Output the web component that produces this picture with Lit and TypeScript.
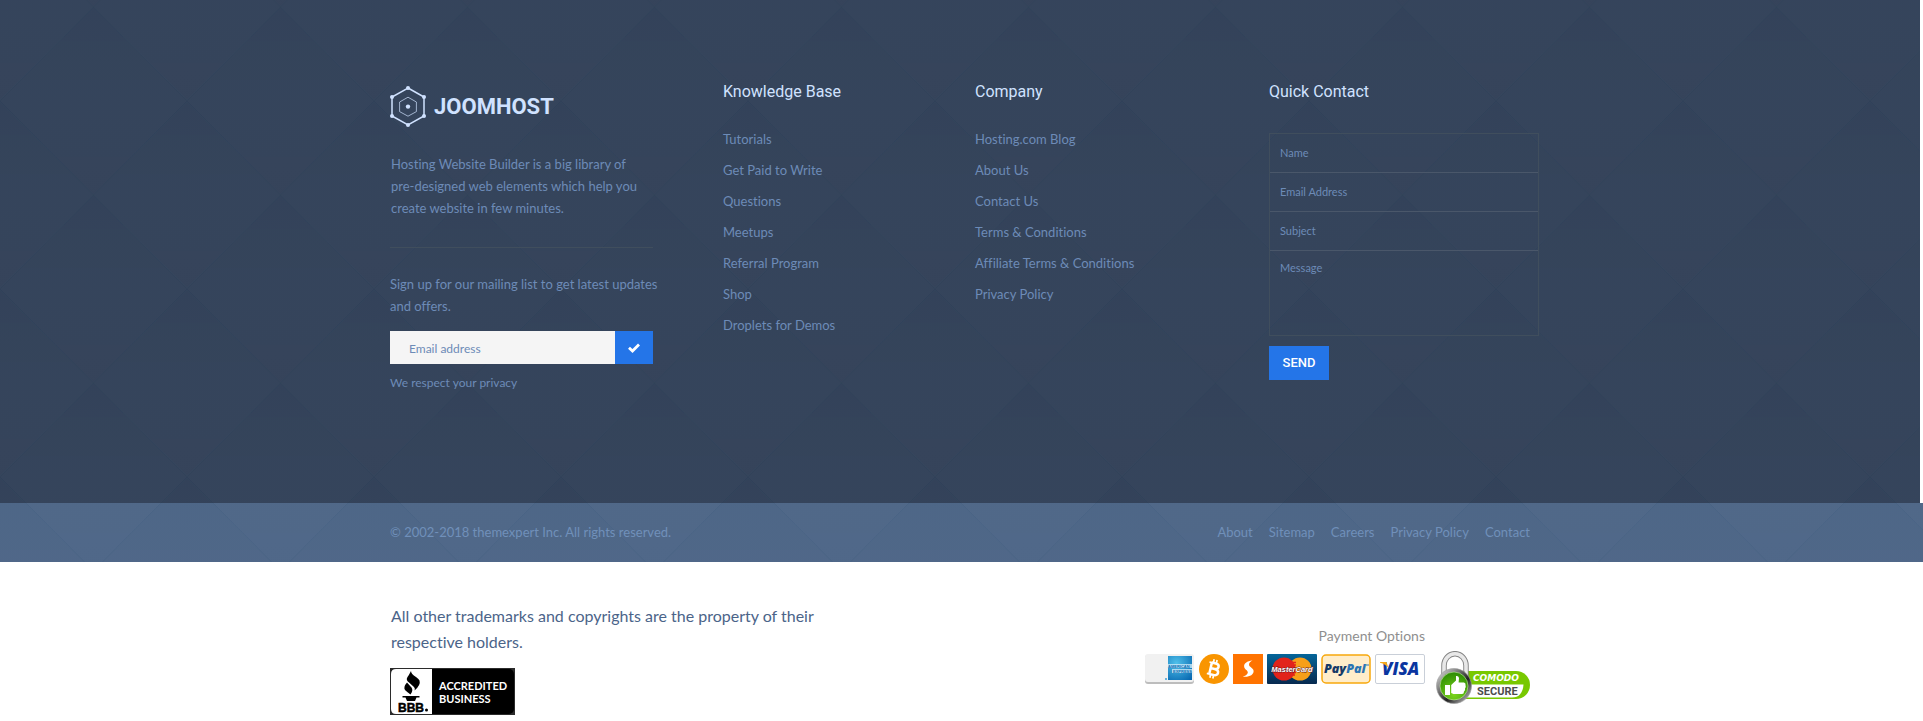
import { LitElement, html, css, svg } from "lit";
import { customElement } from "lit/decorators.js";

const knowledge = ["Tutorials", "Get Paid to Write", "Questions", "Meetups", "Referral Program", "Shop", "Droplets for Demos"];
const company = ["Hosting.com Blog", "About Us", "Contact Us", "Terms & Conditions", "Affiliate Terms & Conditions", "Privacy Policy"];
const legal = ["About", "Sitemap", "Careers", "Privacy Policy", "Contact"];

const logoDots = [[18, 2], [34, 11], [34, 30], [18, 39], [2, 30], [2, 11]];

const logo = html`<svg width="36" height="41" viewBox="0 0 36 41" fill="none" stroke="#d0e2ff" aria-hidden="true">
  <path d="M18 2 34 11V30L18 39 2 30V11Z" stroke-width="1.5" />
  <path d="M18 11.2 26.4 16V25.6L18 30.2 9.6 25.6V16Z" stroke-width="1" opacity=".7" />
  ${logoDots.map(([x, y]) => svg`<circle cx=${x} cy=${y} r="2" fill="#d0e2ff" stroke="none" />`)}
  <circle cx="18" cy="20.6" r="2.2" fill="#d0e2ff" stroke="none" />
</svg>`;

const amex = html`<svg width="50" height="30" viewBox="0 0 50 30" role="img" aria-label="American Express">
  <defs>
    <radialGradient id="ax" cx=".35" cy=".3" r=".9"><stop offset="0" stop-color="#4fc0ea" /><stop offset="1" stop-color="#0767b0" /></radialGradient>
  </defs>
  <rect x="0" y="1" width="49" height="29" rx="3" fill="#bdbdbd" />
  <rect x="0" y="0" width="49" height="28" rx="3" fill="#f1f1f1" />
  <rect x="23" y="2" width="24" height="24" fill="url(#ax)" />
  <rect x="23" y="10" width="24" height="4" fill="#d7effa" opacity=".75" />
  <rect x="27" y="15" width="20" height="4" fill="#d7effa" opacity=".75" />
  <g font-family="Liberation Sans" font-weight="700" font-size="4" fill="#0b6fb5">
    <text x="23" y="14">AMERICAN</text><text x="28" y="19">EXPRESS</text>
  </g>
  <rect x="20" y="24" width="2" height="2" fill="#6bb3dc" />
</svg>`;

const bitcoin = html`<svg width="30" height="30" viewBox="0 0 30 30" role="img" aria-label="Bitcoin">
  <circle cx="15" cy="15" r="15" fill="#f99500" />
  <g transform="rotate(13 15 15)" fill="none" stroke="#fff">
    <path d="M11.5 9V21M11.5 9.2H15.5Q19 9.2 19 12T15.5 14.8H11.5M15.5 14.8Q19.8 14.8 19.8 17.9T15.5 20.9H11.5" stroke-width="2.5" />
    <path d="M9 9.2H12M9 20.9H12M13 5.5V9M16 5.5V9M13 21V24.5M16 21V24.5" stroke-width="1.7" />
  </g>
</svg>`;

const skrill = html`<svg width="30" height="30" viewBox="0 0 30 30" role="img" aria-label="Payment provider">
  <rect width="30" height="30" fill="#ff7300" />
  <path d="M19.5 6.5C14 7 10.500 9.500 11.200 13C11.800 15.800 15.200 16.200 14.800 18.800C14.500 20.700 12 22 9.800 22.600C15.800 23.600 20.800 20.800 20.600 17C20.400 13.600 15.900 13.200 16 10.500C16 8.800 17.500 7.400 19.500 6.500Z" fill="#fff" />
</svg>`;

const mastercard = html`<svg width="50" height="30" viewBox="0 0 50 30" role="img" aria-label="MasterCard">
  <defs><linearGradient id="mc" x2="0" y2="1"><stop stop-color="#04659a" /><stop offset="1" stop-color="#07294f" /></linearGradient></defs>
  <rect width="50" height="30" rx="1" fill="url(#mc)" />
  <circle cx="33" cy="15" r="11.500" fill="#f79f1a" />
  <circle cx="17" cy="15" r="11.500" fill="#e2231a" />
  <path d="M22 8.500H29M22 11H29M23 18.500H29M22 21H28" stroke="#e2231a" stroke-width="1.300" />
  <text x="25" y="18" text-anchor="middle" font-family="Liberation Sans" font-weight="700" font-style="italic" font-size="7.500" fill="#fff" stroke="#5b1620" stroke-width=".8" paint-order="stroke">MasterCard</text>
</svg>`;

const paypal = html`<svg width="50" height="30" viewBox="0 0 50 30" role="img" aria-label="PayPal">
  <rect x="1" y="1" width="48" height="28" rx="4" fill="#ffedca" stroke="#f7a80d" stroke-width="1.500" />
  <g font-family="Open Sans" font-weight="800" font-style="italic" font-size="12.500"><text x="3" y="19" fill="#163a67">Pay<tspan fill="#2c74b3">Pal</tspan></text></g>
  <path d="M45 11H48" stroke="#2c74b3" />
</svg>`;

const visa = html`<svg width="50" height="30" viewBox="0 0 50 30" role="img" aria-label="Visa">
  <rect x=".5" y=".5" width="49" height="29" rx="1.500" fill="#fff" stroke="#c9cfd8" />
  <text x="7" y="21" font-family="Open Sans" font-weight="800" font-style="italic" font-size="17" fill="#0a35a0">VISA</text>
  <path d="M5 8H11.500L13.500 14Q10.500 10 5 8.800Z" fill="#f8a81b" />
</svg>`;

const comodo = html`<svg width="94" height="53" viewBox="0 0 94 53" role="img" aria-label="Comodo Secure">
  <defs>
    <linearGradient id="mt" x2="1" y2="1"><stop stop-color="#eee" /><stop offset=".35" stop-color="#777" /><stop offset=".6" stop-color="#222" /><stop offset="1" stop-color="#ddd" /></linearGradient>
    <radialGradient id="gr" cx=".5" cy=".8" r=".8"><stop stop-color="#7bd51a" /><stop offset="1" stop-color="#2c8a04" /></radialGradient>
  </defs>
  <path d="M20 20H80A14 14 0 0 1 80 48H20Z" fill="#78c800" />
  <path d="M20 33.500H87.500Q86.500 46.500 76 46.500H20Z" fill="#fff" />
  <path d="M8 27V14.500A11 11.800 0 0 1 30 14.500V27" fill="none" stroke="#858585" stroke-width="5.500" />
  <path d="M8 27V14.500A11 11.800 0 0 1 30 14.500V27" fill="none" stroke="#e8e8e8" stroke-width="3.600" />
  <circle cx="18" cy="35" r="17.500" fill="url(#mt)" stroke="#999" stroke-width=".6" />
  <circle cx="18" cy="35" r="14" fill="url(#gr)" stroke="#dfffc0" stroke-width=".5" />
  <path d="M9 34H14V44H9ZM15.200 34 20 29.500V25Q22.500 24.500 23 27L22.600 31.500H28Q30 32 29.500 34Q30.300 36 29 37.500Q29.500 39.500 28 40.500Q28 43 26 43H17.500L15.200 42Z" fill="#fff" />
  <text x="37" y="30" font-family="DejaVu Sans" font-weight="700" font-style="italic" font-size="9" fill="#fff">COMODO</text>
  <text x="41" y="44" font-family="Liberation Sans Narrow, Roboto" font-weight="700" font-size="11" fill="#4d4d4d">SECURE</text>
</svg>`;

const bbb = html`<svg width="125" height="47" viewBox="0 0 125 47" role="img" aria-label="BBB Accredited Business">
  <rect width="125" height="47" fill="#2b2b2b" />
  <rect x="1" y="1" width="123" height="45" rx="5" fill="#000" />
  <path d="M42 1V46H6Q1 46 1 41V6Q1 1 6 1Z" fill="#fff" />
  <path d="M21 3Q19 7 17.500 9Q15.500 12 19 14.500L24 19Q25.500 20.500 24.500 22.500Q31 17 29.500 12.500Q29 11 26 9Q21 6 21 3Z" />
  <path d="M17 14.500Q13 19 15 22Q17 24 20.500 26.500Q23.500 22.500 21.500 19.500Z" />
  <path d="M12.500 28H29.500V29.500H26.500L25 33H17L15.500 29.500H12.500Z" />
  <text x="8" y="44" font-family="Liberation Sans" font-weight="700" font-size="12" stroke="#000" stroke-width=".5">BBB</text>
  <circle cx="36.500" cy="42" r="1.500" />
  <g font-family="Lato" font-weight="700" font-size="11" fill="#fff"><text x="49" y="22">ACCREDITED</text><text x="49" y="35">BUSINESS</text></g>
</svg>`;

@customElement("app-root")
export class AppRoot extends LitElement {
  static styles = css`
    :host {
      display: block;
      background: #fff;
      color: #6d8bb7;
      font: 13px/22px Lato, "Open Sans", sans-serif;
      font-variant-ligatures: none;
      --diamonds: url("data:image/svg+xml,%3Csvg xmlns='http://www.w3.org/2000/svg' width='187' height='188'%3E%3Cdefs%3E%3ClinearGradient id='g' x2='0' y2='1'%3E%3Cstop stop-color='%23002848' stop-opacity='.025'/%3E%3Cstop offset='1' stop-color='%23fff' stop-opacity='.006'/%3E%3C/linearGradient%3E%3C/defs%3E%3Cg fill='url(%23g)' stroke='%23002838' stroke-opacity='.03'%3E%3Cpath d='M93.500 0 187 94 93.500 188 0 94Z'/%3E%3Cpath d='M0-94 93.500 0 0 94-93.500 0Z'/%3E%3Cpath d='M187-94 280.500 0 187 94 93.500 0Z'/%3E%3Cpath d='M0 94 93.500 188 0 282-93.500 188Z'/%3E%3Cpath d='M187 94 280.500 188 187 282 93.500 188Z'/%3E%3C/g%3E%3C/svg%3E");
    }
    * { box-sizing: border-box; }
    h2, p, ul { margin: 0; padding: 0; font-weight: 400; }
    ul { list-style: none; }
    svg { display: block; flex: none; }
    a { color: inherit; text-decoration: none; }
    input, textarea, button { display: block; margin: 0; border: 0; border-radius: 0; font: inherit; outline-offset: -2px; }
    .wrap { max-width: 1170px; margin: 0 auto; padding: 0 15px; }

    /* Label and control share one grid cell; the label steps aside once there is a value. */
    .field { display: grid; }
    .field > * { grid-area: 1 / 1; }
    .field label { pointer-events: none; }
    .field :not(:placeholder-shown) + label { visibility: hidden; }

    .main {
      margin-right: 3px;
      padding: 81px 0 109px;
      background: var(--diamonds) 0 7px, #34435a;
    }
    .columns {
      display: grid;
      grid-template-columns: 333fr 252fr 294fr 270fr;
      padding-right: 6px;
    }
    .about { padding-right: 70px; }
    .brand {
      display: flex;
      align-items: center;
      gap: 8px;
      padding: 5px 0 26px;
      color: #d0e2ff;
      font: 700 22px/41px Roboto, sans-serif;
    }
    .intro { padding: 0 12px 28px 1px; }
    .signup { border-top: 1px solid #404e5d; padding-top: 25px; }
    .signup p { margin-right: -16px; }
    .mail { display: flex; height: 33px; margin: 14px 0 8px; font-size: 12px; }
    .mail .field { flex: 1; background: #f5f5f5; line-height: 33px; }
    .mail input { width: 100%; padding: 2px 19px 0; background: none; color: inherit; }
    .mail label { padding: 1px 19px 0; }
    .mail button { display: grid; place-items: center; width: 38px; padding: 0; background: #2475e8; }
    .note { font-size: 12px; }
    h2 { color: #d0e2ff; font: 400 16px/22px Roboto, sans-serif; }
    .links { padding-top: 21px; line-height: 31px; }
    .fields { margin: 30px 0 10px; border: 1px solid #404e5d; font-size: 11px; }
    .fields .field { height: 39px; border-bottom: 1px solid #4a576a; line-height: 38px; }
    .fields .area { height: 84px; border: 0; line-height: 34px; }
    .fields input, .fields textarea { width: 100%; padding: 0 10px; background: none; color: inherit; resize: none; }
    .fields label { padding: 0 10px; }
    .send { height: 34px; min-width: 60px; padding: 0 13px; background: #2475e8; color: #fff; font: 500 13px/34px Roboto, sans-serif; }
    .bar { padding: 18px 3px 19px 0; background: var(--diamonds) 0 68px, #4f6788; color: #7090ba; }
    .bar .wrap, .bar nav { display: flex; justify-content: space-between; }
    .bar nav { gap: 16px; }
    .bottom { padding: 41px 3px 6px 0; }
    .bottom .wrap { display: flex; justify-content: space-between; align-items: flex-start; }
    .trade { max-width: 430px; padding-left: 1px; margin-bottom: 13px; color: #4b6489; font-size: 16px; line-height: 26px; }
    .trust { display: flex; gap: 11px; padding-top: 22px; }
    .caption { padding-bottom: 7px; text-align: right; color: #8f8f8f; font-size: 14px; }
    .cards { display: flex; gap: 4px; }
    .secure { padding-top: 26px; }
  `;

  private list(items: string[]) {
    return html`<ul class="links">${items.map((t) => html`<li><a href="#">${t}</a></li>`)}</ul>`;
  }

  private field(id: string, type: string, text: string) {
    return html`<div class="field"><input id=${id} type=${type} placeholder=" " /><label for=${id}>${text}</label></div>`;
  }

  render() {
    return html`
      <footer>
        <div class="main">
          <div class="wrap columns">
            <section class="about">
              <div class="brand">${logo}<span>JOOMHOST</span></div>
              <p class="intro">Hosting Website Builder is a big library of pre-designed web elements which help you create website in few minutes.</p>
              <div class="signup">
                <p>Sign up for our mailing list to get latest updates and offers.</p>
                <form class="mail">
                  ${this.field("news", "email", "Email address")}
                  <button type="button" aria-label="Subscribe">
                    <svg width="12" height="10" viewBox="0 0 12 10" fill="none" stroke="#fff" stroke-width="2.800"><path d="M1 4.700 4.500 8 11 1.500" /></svg>
                  </button>
                </form>
                <p class="note">We respect your privacy</p>
              </div>
            </section>
            <section><h2>Knowledge Base</h2>${this.list(knowledge)}</section>
            <section><h2>Company</h2>${this.list(company)}</section>
            <section>
              <h2>Quick Contact</h2>
              <form>
                <div class="fields">
                  ${this.field("name", "text", "Name")}
                  ${this.field("email", "email", "Email Address")}
                  ${this.field("subject", "text", "Subject")}
                  <div class="field area"><textarea id="message" placeholder=" "></textarea><label for="message">Message</label></div>
                </div>
                <button class="send" type="button">SEND</button>
              </form>
            </section>
          </div>
        </div>
        <div class="bar">
          <div class="wrap">
            <p>© 2002-2018 themexpert Inc. All rights reserved.</p>
            <nav>${legal.map((t) => html`<a href="#">${t}</a>`)}</nav>
          </div>
        </div>
        <div class="bottom">
          <div class="wrap">
            <div>
              <p class="trade">All other trademarks and copyrights are the property of their respective holders.</p>
              ${bbb}
            </div>
            <div class="trust">
              <div>
                <p class="caption">Payment Options</p>
                <div class="cards">${amex}${bitcoin}${skrill}${mastercard}${paypal}${visa}</div>
              </div>
              <div class="secure">${comodo}</div>
            </div>
          </div>
        </div>
      </footer>
    `;
  }
}
